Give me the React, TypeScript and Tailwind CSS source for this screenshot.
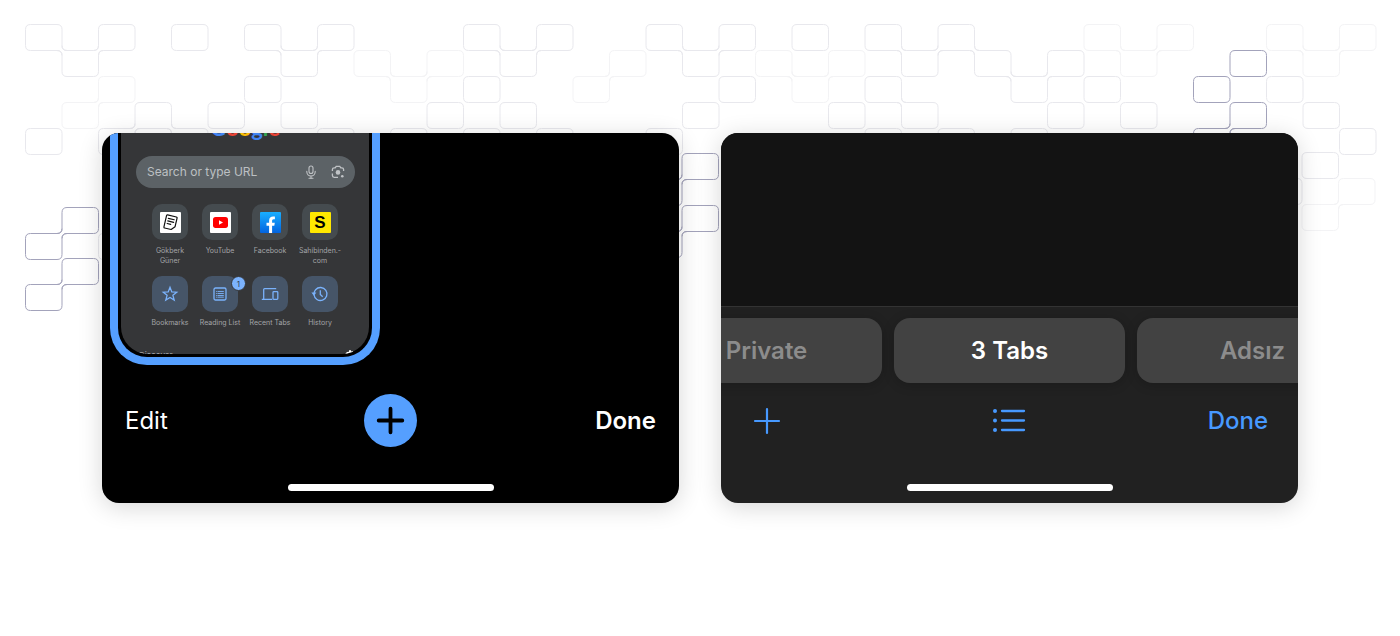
import type { ReactNode } from "react";

type Cluster = { x: number; y: number; rows: string[] };

const PITCH_X = 36.5;
const PITCH_Y = 26;
const RADIUS = 5;

const TONES: Record<string, string> = {
  a: "#e8e8ed",
  b: "#e8e8ed",
  c: "#e8e8ed",
  f: "#f3f3f5",
  d: "#a3a3bb",
  e: "#a3a3bb",
};

// Each letter is one cell; diagonal neighbours with the same letter flow into each other.
const CLUSTERS: Cluster[] = [
  {
    x: 25.5,
    y: 24.5,
    rows: [
      "a.a.a.a.a...a.a..a.a.a.a.a...f.f..f.f",
      ".a.....a.f.f.a..f.a.f.f.a.a.a.f..d.f.",
      "..f...b...f.b..f...b.f.b...a.c..e.b..",
      ".f.b.a.c...c.a....c...c.b...b.a..d.c.",
      "b.b.b...b.b.b.b..b.....a.c.c....d...b",
    ],
  },
  { x: 24.5, y: 152.5, rows: [".".repeat(35) + "a", ".".repeat(34) + "c.f", ".".repeat(35) + "e".replace("e", "f")] },
  { x: 25.5, y: 207.5, rows: [".d", "d.a"] },
  { x: 25.5, y: 258.5, rows: [".e", "e"] },
  { x: 645.5, y: 153.5, rows: [".d", "d.", ".e", "e."] },
];

function cellPath(rows: string[], r: number, c: number, ox: number, oy: number) {
  const tone = rows[r][c];
  const x0 = ox + c * PITCH_X;
  const y0 = oy + r * PITCH_Y;
  const x1 = x0 + PITCH_X;
  const y1 = y0 + PITCH_Y;
  const q = RADIUS;
  let d = `M${x0 + q} ${y0}H${x1 - q}M${x1} ${y0 + q}V${y1 - q}M${x1 - q} ${y1}H${x0 + q}M${x0} ${y1 - q}V${y0 + q}`;
  const corners = [
    { x: x0, y: y0, sx: -1, sy: -1 },
    { x: x1, y: y0, sx: 1, sy: -1 },
    { x: x1, y: y1, sx: 1, sy: 1 },
    { x: x0, y: y1, sx: -1, sy: 1 },
  ];
  for (const k of corners) {
    const joined = rows[r + k.sy]?.[c + k.sx] === tone;
    const hx = k.x - k.sx * q;
    const vy = k.y - k.sy * q;
    if (!joined) {
      d += `M${hx} ${k.y}Q${k.x} ${k.y} ${k.x} ${vy}`;
    } else {
      d += `M${hx} ${k.y}Q${k.x} ${k.y} ${k.x} ${k.y + k.sy * q}`;
      d += `M${k.x} ${vy}Q${k.x} ${k.y} ${k.x + k.sx * q} ${k.y}`;
    }
  }
  return d;
}

function Pattern() {
  return (
    <svg
      viewBox="0 0 1400 636"
      className="col-start-1 row-start-1 w-full"
      fill="none"
      strokeWidth="1"
      aria-hidden="true"
    >
      {CLUSTERS.flatMap((cl, n) =>
        cl.rows.flatMap((row, r) =>
          [...row].map((ch, c) =>
            ch === "." ? null : (
              <path key={`${n}-${r}-${c}`} d={cellPath(cl.rows, r, c, cl.x, cl.y)} stroke={TONES[ch]} />
            ),
          ),
        ),
      )}
    </svg>
  );
}

function Shortcut({
  label,
  tinted,
  badge,
  children,
}: {
  label: ReactNode;
  tinted?: boolean;
  badge?: string;
  children: ReactNode;
}) {
  return (
    <a href="#" className="flex flex-col items-center gap-1.5">
      <span
        className={`relative flex size-9 items-center justify-center rounded-[10px] ${
          tinted ? "bg-[#465568] text-[#7ab2fb]" : "bg-[#454b4f]"
        }`}
      >
        {children}
        {badge && (
          <span className="absolute top-0 left-[29px] flex size-[15px] items-center justify-center rounded-full border border-[#353638] bg-[#7cb3fd] text-[8px] leading-none text-[#2c3e55]">
            {badge}
          </span>
        )}
      </span>
      <span className="text-center text-[7px] leading-[10px] whitespace-nowrap text-[#a3a4a7]">{label}</span>
    </a>
  );
}

function SearchBar() {
  return (
    <div className="mr-[14px] ml-[15px] flex h-8 items-center rounded-full bg-[#5c6266] pr-[9px] pl-[11px] text-[#c0c3c6]">
      <input
        aria-label="Search or type URL"
        placeholder="Search or type URL"
        className="min-w-0 flex-1 bg-transparent text-[12px] outline-none placeholder:text-[#bcc0c3]"
      />
      <button aria-label="Voice search" className="mr-[11px]">
        <svg width="16" height="16" viewBox="0 0 16 16" fill="none" stroke="currentColor" strokeWidth="1.1">
          <rect x="6" y="2" width="4" height="7.5" rx="2" />
          <path d="M3.8 7.2v.6a4.2 4.2 0 0 0 8.4 0v-.6M8 12v2.4M6 14.2h4" strokeLinecap="round" />
        </svg>
      </button>
      <button aria-label="Search with camera">
        <svg width="16" height="16" viewBox="0 0 16 16" fill="none" stroke="currentColor" strokeWidth="1.3">
          <path d="M2.4 7V5.6a1.8 1.8 0 0 1 1.8-1.8h1L6.2 2.4h3.6l1 1.4h1a1.8 1.8 0 0 1 1.8 1.8V7M2.4 9.6v2a1.8 1.8 0 0 0 1.8 1.8H8" />
          <circle cx="8" cy="8.4" r="2.3" fill="currentColor" stroke="none" />
          <circle cx="12.3" cy="12.2" r="1.3" fill="currentColor" stroke="none" />
        </svg>
      </button>
    </div>
  );
}

function TabPreview() {
  return (
    <div className="ml-2 w-[270px] rounded-b-[37px] border-x-8 border-b-8 border-[#559fff] bg-black px-[3px] pb-[3px]">
      <div className="overflow-hidden rounded-b-[27px] bg-[#353638]">
        <div
          className="flex h-[9px] items-end justify-center overflow-hidden font-['Lato',sans-serif] text-[22px] leading-[28px] font-bold"
          aria-label="Google"
        >
          <span className="text-[#4285f4]">G</span>
          <span className="text-[#ea4335]">o</span>
          <span className="text-[#fbbc05]">o</span>
          <span className="text-[#4285f4]">g</span>
          <span className="text-[#34a853]">l</span>
          <span className="text-[#ea4335]">e</span>
        </div>
        <div className="mt-[14px]">
          <SearchBar />
        </div>
        <div className="mx-auto mt-4 grid w-[200px] grid-cols-4 gap-y-[10px]">
          <Shortcut
            label={
              <>
                Gökberk
                <br />
                Güner
              </>
            }
          >
            <svg width="21" height="21" viewBox="0 0 21 21" fill="none" stroke="#111" strokeWidth="1.2">
              <rect width="21" height="21" rx="1" fill="#fff" stroke="none" />
              <g transform="rotate(13 10.5 10.5)" strokeLinecap="round" strokeLinejoin="round">
                <path d="M6 3.8h9a.9.9 0 0 1 .9.9v8.9l-3.2 3.6H6a.9.9 0 0 1-.9-.9V4.7a.9.9 0 0 1 .9-.9z" />
                <path d="M7.5 7h6M7.5 9.6h6M7.5 12.2h3.6" />
              </g>
            </svg>
          </Shortcut>
          <Shortcut label="YouTube">
            <svg width="21" height="21" viewBox="0 0 21 21">
              <rect width="21" height="21" rx="1" fill="#fff" />
              <rect x="3" y="5.1" width="15" height="10.8" rx="2.6" fill="#f00" />
              <path d="M9 8.3l4 2.2-4 2.2z" fill="#fff" />
            </svg>
          </Shortcut>
          <Shortcut label="Facebook">
            <svg width="21" height="21" viewBox="0 0 21 21">
              <defs>
                <linearGradient id="fb" x1="0" y1="0" x2="0" y2="1">
                  <stop offset="0" stopColor="#19aeff" />
                  <stop offset="1" stopColor="#0364e0" />
                </linearGradient>
              </defs>
              <rect width="21" height="21" rx="1" fill="url(#fb)" />
              <path
                d="M9.1 21v-7.2H6.5v-3h2.6V8.7c0-2.8 1.6-4.2 4-4.2.9 0 1.8.1 1.8.1v2.6h-1.2c-1.2 0-1.6.8-1.6 1.6v2h2.7l-.5 3h-2.2V21z"
                fill="#fff"
              />
            </svg>
          </Shortcut>
          <Shortcut
            label={
              <>
                Sahibinden.-
                <br />
                com
              </>
            }
          >
            <span className="flex size-[21px] items-center justify-center rounded-[1px] bg-[#ffe800] font-['Liberation_Sans',sans-serif] text-[17px] leading-none font-bold text-black">
              S
            </span>
          </Shortcut>
          <Shortcut label="Bookmarks" tinted>
            <svg width="18" height="18" viewBox="0 0 18 18" fill="none" stroke="currentColor" strokeWidth="1.3">
              <path d="M9 2.3l1.8 4.6 4.9.3-3.8 3.1 1.3 4.8L9 12.4l-4.2 2.7 1.3-4.8-3.8-3.1 4.9-.3z" />
            </svg>
          </Shortcut>
          <Shortcut label="Reading List" tinted badge="1">
            <svg width="18" height="18" viewBox="0 0 18 18" fill="none" stroke="currentColor">
              <rect x="3" y="3" width="12" height="12" rx="1.5" strokeWidth="1.3" />
              <path
                d="M5.2 6.5h1.3M7 6.5h5.8M5.2 8.5h1.3M7 8.5h5.8M5.2 10.5h1.3M7 10.5h5.8M5.2 12.2h1.3M7 12.2h5.8"
                strokeWidth="0.9"
              />
            </svg>
          </Shortcut>
          <Shortcut label="Recent Tabs" tinted>
            <svg width="18" height="18" viewBox="0 0 18 18" fill="none" stroke="currentColor" strokeWidth="1.3">
              <path d="M.8 14.3h10.4M2.7 14V4.5a.9.9 0 0 1 .9-.9h11.6" />
              <rect x="12" y="6.6" width="4.8" height="7.7" rx=".8" />
            </svg>
          </Shortcut>
          <Shortcut label="History" tinted>
            <svg width="18" height="18" viewBox="0 0 18 18" fill="none" stroke="currentColor" strokeWidth="1.3">
              <path d="M3 9.5A6.5 6.5 0 1 0 4.6 4.7 6.4 6.4 0 0 0 3 8.5" />
              <path d="M.4 7.6h5L2.9 10.8z" fill="currentColor" stroke="none" />
              <path d="M9.3 5.2v4.2l2.4 2.4" />
            </svg>
          </Shortcut>
        </div>
        <div className="mt-[22px] flex h-[4px] items-start justify-between overflow-hidden pr-[14px] pl-[18px]">
          <span className="text-[8px] leading-[10px] font-medium text-[#a3a4a7]">Discover</span>
          <svg width="10" height="10" viewBox="0 0 10 10" fill="#fff" className="shrink-0" aria-hidden="true">
            <path d="M4 .2h2v1.4l1.5-.6 1 1.5-1 1h2v2H.5v-2L2 2.1l2-.3z" />
          </svg>
        </div>
      </div>
    </div>
  );
}

function HomeBar() {
  return <div className="mx-auto mt-[37px] mb-3 h-[7px] w-[206px] rounded-full bg-white" />;
}

const CARD =
  "flex min-w-0 flex-col overflow-hidden rounded-[17px] shadow-[0_4px_24px_rgba(0,0,0,0.16)]";

function ChromeCard() {
  return (
    <section className={`${CARD} bg-black`}>
      <TabPreview />
      <div className="mt-[29px] grid grid-cols-3 items-center px-[23px] text-[24px] leading-[30px] text-white">
        <button className="justify-self-start">Edit</button>
        <button
          aria-label="New tab"
          className="flex size-[53px] items-center justify-center justify-self-center rounded-full bg-[#559fff] text-black"
        >
          <svg width="29" height="29" viewBox="0 0 29 29" stroke="currentColor" strokeWidth="3.8" strokeLinecap="round">
            <path d="M14.5 2.7v23.6M2.7 14.5h23.6" />
          </svg>
        </button>
        <button className="justify-self-end font-semibold">Done</button>
      </div>
      <HomeBar />
    </section>
  );
}

const GROUP = "h-[65px] w-[231px] shrink-0 rounded-2xl bg-[#424242] shadow-[0_2px_12px_rgba(0,0,0,0.2)]";

function SafariCard() {
  return (
    <section className={`${CARD} bg-[#212121]`}>
      <div className="min-h-[172px] flex-1 bg-[#131313]" />
      <div className="flex justify-center gap-3 border-t border-[#333] pt-[11px] text-[24px] leading-[30px] font-semibold text-[#8c8c8c]">
        <button className={GROUP}>Private</button>
        <button className={`${GROUP} text-white`}>3 Tabs</button>
        <button className={GROUP}>Adsız</button>
      </div>
      <div className="mt-[11px] grid h-[53px] grid-cols-3 items-center px-[30px] text-[24px] leading-[30px] text-[#4799ff]">
        <button aria-label="New tab" className="justify-self-start">
          <svg width="32" height="32" viewBox="0 0 32 32" stroke="currentColor" strokeWidth="2.2" strokeLinecap="round">
            <path d="M16 4v24M4 16h24" />
          </svg>
        </button>
        <button aria-label="Tab groups" className="justify-self-center">
          <svg width="34" height="26" viewBox="0 0 34 26" stroke="currentColor" strokeWidth="2.3" strokeLinecap="round">
            <path d="M10 3h22M10 12.5h22M10 22h22" />
            <g fill="currentColor" stroke="none">
              <circle cx="3" cy="3" r="2" />
              <circle cx="3" cy="12.5" r="2" />
              <circle cx="3" cy="22" r="2" />
            </g>
          </svg>
        </button>
        <button className="justify-self-end font-medium">Done</button>
      </div>
      <HomeBar />
    </section>
  );
}

export default function App() {
  return (
    <main className="grid min-h-screen overflow-hidden bg-white font-['Inter',sans-serif]">
      <Pattern />
      <div className="col-start-1 row-start-1 grid grid-cols-2 content-start gap-[42px] px-[102px] py-[133px]">
        <ChromeCard />
        <SafariCard />
      </div>
    </main>
  );
}
